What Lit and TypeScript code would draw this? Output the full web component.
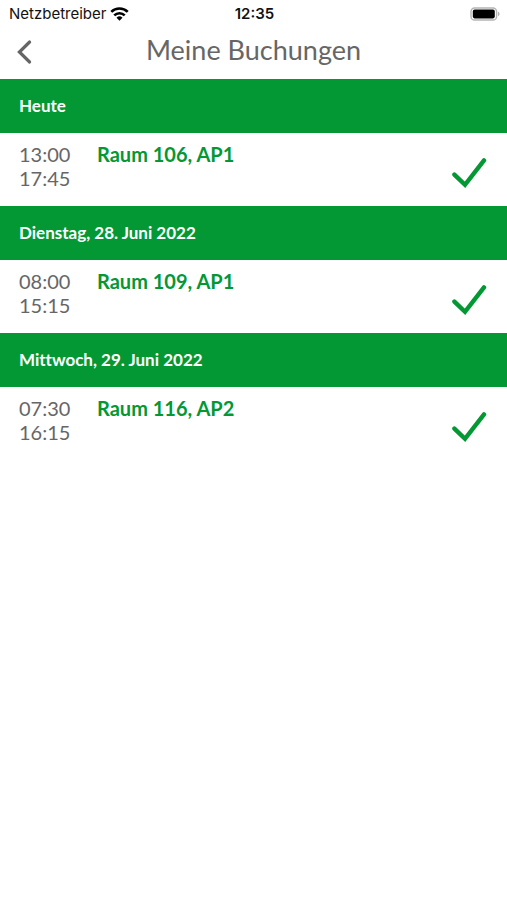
import { LitElement, html, css } from "lit";
import { customElement } from "lit/decorators.js";

interface Booking {
  start: string;
  end: string;
  room: string;
}

interface Day {
  label: string;
  bookings: Booking[];
}

const DAYS: Day[] = [
  { label: "Heute", bookings: [{ start: "13:00", end: "17:45", room: "Raum 106, AP1" }] },
  { label: "Dienstag, 28. Juni 2022", bookings: [{ start: "08:00", end: "15:15", room: "Raum 109, AP1" }] },
  { label: "Mittwoch, 29. Juni 2022", bookings: [{ start: "07:30", end: "16:15", room: "Raum 116, AP2" }] },
];

@customElement("status-bar")
class StatusBar extends LitElement {
  static styles = css`
    :host {
      display: grid;
      grid-template-columns: 1fr auto 1fr;
      align-items: center;
      height: 28px;
      padding: 0 7px 0 9px;
      font: 15px/28px Inter, sans-serif;
      color: #111;
    }
    .carrier {
      display: flex;
      align-items: center;
      gap: 4px;
    }
    .time {
      font-weight: 600;
    }
    .battery {
      justify-self: end;
    }
    svg {
      display: block;
    }
  `;

  render() {
    return html`
      <div class="carrier">
        <span>Netzbetreiber</span>
        <svg width="19" height="14" viewBox="0 0 20 15" fill="none" stroke="#000" stroke-width="2.8">
          <path d="M1.2 5.2a12.5 12.5 0 0 1 17.6 0" />
          <path d="M4.4 9a8 8 0 0 1 11.2 0" />
          <path d="M10 14.6 6.8 11.4a4.6 4.6 0 0 1 6.4 0z" fill="#000" stroke="none" />
        </svg>
      </div>
      <span class="time">12:35</span>
      <svg class="battery" width="30" height="14" viewBox="0 0 30 14">
        <rect x="1" y="1" width="25.6" height="12" rx="3.6" fill="none" stroke="#b4b4b4" stroke-width="1.4" />
        <rect x="2.8" y="2.6" width="22" height="8.8" rx="1.8" />
        <path d="M28 4.8c2 .6 2 3.8 0 4.4z" fill="#b4b4b4" />
      </svg>
    `;
  }
}

@customElement("booking-row")
class BookingRow extends LitElement {
  static properties = { booking: { attribute: false } };
  declare booking: Booking;

  static styles = css`
    :host {
      display: grid;
      grid-template-columns: 78px 1fr auto;
      padding: 9px 20px 16px 19px;
      font-size: 20px;
      line-height: 24px;
      color: #666;
    }
    .times {
      display: flex;
      flex-direction: column;
    }
    .room {
      font-weight: 700;
      color: #039834;
    }
    svg {
      display: block;
      align-self: end;
    }
  `;

  render() {
    return html`
      <div class="times"><time>${this.booking.start}</time><time>${this.booking.end}</time></div>
      <div class="room">${this.booking.room}</div>
      <svg width="36" height="32" viewBox="0 0 36 32" fill="none" stroke="#039834" stroke-width="4.4" role="img" aria-label="Bestätigt">
        <path d="M3.4 16.6 14 26.8 33 2.4" stroke-linecap="round" />
      </svg>
    `;
  }
}

@customElement("app-root")
class AppRoot extends LitElement {
  static styles = css`
    :host {
      display: block;
      min-height: 100vh;
      background: #fff;
      font-family: Lato, sans-serif;
      font-variant-ligatures: none;
    }
    header {
      display: grid;
      grid-template-columns: 48px 1fr 48px;
      align-items: start;
      padding-bottom: 3px;
    }
    .back {
      display: grid;
      place-items: center;
      height: 48px;
      padding: 0;
      border: 0;
      background: none;
    }
    h1 {
      margin: 0;
      font-size: 27px;
      font-weight: 400;
      line-height: 44px;
      text-align: center;
      color: #666;
    }
    h2 {
      margin: 0;
      padding: 0 19px;
      font-size: 17px;
      font-weight: 700;
      line-height: 54px;
      color: #fff;
      background: #039834;
    }
  `;

  render() {
    return html`
      <status-bar></status-bar>
      <header>
        <button class="back" aria-label="Zurück">
          <svg width="16" height="26" viewBox="0 0 16 26" fill="none" stroke="#666" stroke-width="3.2">
            <path d="M13.6 3 3.4 13l10.2 10" stroke-linecap="round" />
          </svg>
        </button>
        <h1>Meine Buchungen</h1>
      </header>
      <main>
        ${DAYS.map(
          (day) => html`
            <section>
              <h2>${day.label}</h2>
              ${day.bookings.map((b) => html`<booking-row .booking=${b}></booking-row>`)}
            </section>
          `,
        )}
      </main>
    `;
  }
}
